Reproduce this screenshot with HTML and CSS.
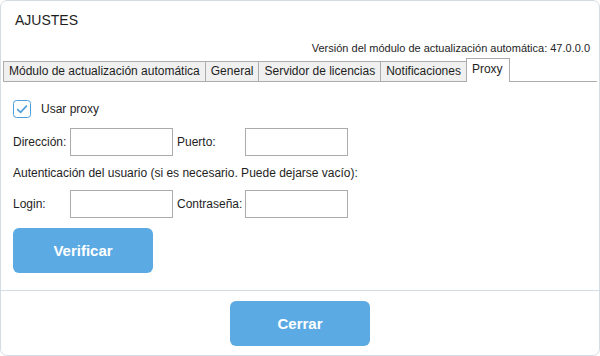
FILE: index.html
```html
<!DOCTYPE html>
<html lang="es">
<head>
    <meta charset="UTF-8">
    <meta name="viewport" content="width=device-width, initial-scale=1.0">
    <title>Ajustes</title>
    <link rel="stylesheet" href="styles.css">
</head>
<body>
    <div class="window">
        <div class="title">AJUSTES</div>
        <div class="version">Versión del módulo de actualización automática: 47.0.0.0</div>

        <div class="tabs">
            <div class="tab">Módulo de actualización automática</div>
            <div class="tab">General</div>
            <div class="tab">Servidor de licencias</div>
            <div class="tab">Notificaciones</div>
            <div class="tab active">Proxy</div>
        </div>

        <div class="panel">
            <label class="check-row">
                <span class="checkbox">
                    <svg width="18" height="18" viewBox="0 0 18 18">
                        <rect x="0.5" y="0.5" width="17" height="17" rx="3" fill="#fff" stroke="#4d9fdc"/>
                        <path d="M4.2 9.2 L7.6 12.4 L13.8 5.6" fill="none" stroke="#4d9fdc" stroke-width="1.6"/>
                    </svg>
                </span>
                Usar proxy
            </label>

            <div class="field-row">
                <label for="address">Dirección:</label>
                <input type="text" id="address">
                <label for="port" class="second">Puerto:</label>
                <input type="text" id="port">
            </div>

            <p class="hint">Autenticación del usuario (si es necesario. Puede dejarse vacío):</p>

            <div class="field-row">
                <label for="login">Login:</label>
                <input type="text" id="login">
                <label for="password" class="second">Contraseña:</label>
                <input type="password" id="password">
            </div>

            <button type="button" class="btn">Verificar</button>
        </div>

        <div class="footer">
            <button type="button" class="btn">Cerrar</button>
        </div>
    </div>
</body>
</html>
```

FILE: styles.css
```css
body {
    margin: 0;
    padding: 0;
    font-family: 'Segoe UI', 'Liberation Sans', Arial, sans-serif;
    color: #1e1e1e;
    background-color: #fff;
}

.window {
    width: 600px;
    height: 356px;
    box-sizing: border-box;
    border: 1px solid #d3dce4;
    border-radius: 7px;
    display: flex;
    flex-direction: column;
    background-color: #fff;
}

.title {
    font-size: 14px;
    line-height: 16px;
    padding: 11px 14px 0;
}

.version {
    font-size: 11px;
    line-height: 13px;
    text-align: right;
    padding-right: 9px;
    margin-top: 14px;
}

.tabs {
    display: flex;
    align-items: flex-end;
    height: 22px;
    margin: 4px 2px 0;
    border-bottom: 1px solid #acacac;
    font-size: 12px;
}

.tab {
    height: 19px;
    line-height: 19px;
    padding: 0 5px;
    background-color: #f0f0f0;
    border: 1px solid #acacac;
    border-bottom: none;
    margin-left: -1px;
    white-space: nowrap;
}

.tab:first-child {
    margin-left: 0;
}

.tab.active {
    height: 23px;
    line-height: 21px;
    margin-bottom: -1px;
    background-color: #fff;
    padding: 0 6px 0 5px;
    position: relative;
}

.panel {
    flex: 1;
    padding: 18px 12px 0;
    font-size: 12px;
    display: flex;
    flex-direction: column;
    align-items: flex-start;
}

.check-row {
    display: flex;
    align-items: center;
    gap: 10px;
    height: 18px;
}

.checkbox {
    display: flex;
}

.field-row {
    display: grid;
    grid-template-columns: 57px 103px 72px 103px;
    align-items: center;
    margin-top: 10px;
}

.field-row label.second {
    padding-left: 4px;
}

input {
    height: 28px;
    box-sizing: border-box;
    border: 1px solid #ababab;
    margin: 0;
    padding: 2px 4px;
    font-size: 12px;
}

.hint {
    margin: 10px 0 0;
    line-height: 14px;
}

.btn {
    width: 140px;
    height: 45px;
    border: none;
    border-radius: 6px;
    background-color: #5caae3;
    color: #fff;
    font-family: 'Segoe UI', 'Liberation Sans', Arial, sans-serif;
    font-size: 15px;
    font-weight: bold;
    cursor: pointer;
}

.panel .btn {
    margin-top: 10px;
}

.footer {
    border-top: 1px solid #d3dce4;
    padding: 10px 0 9px;
    display: flex;
    justify-content: center;
}
```
